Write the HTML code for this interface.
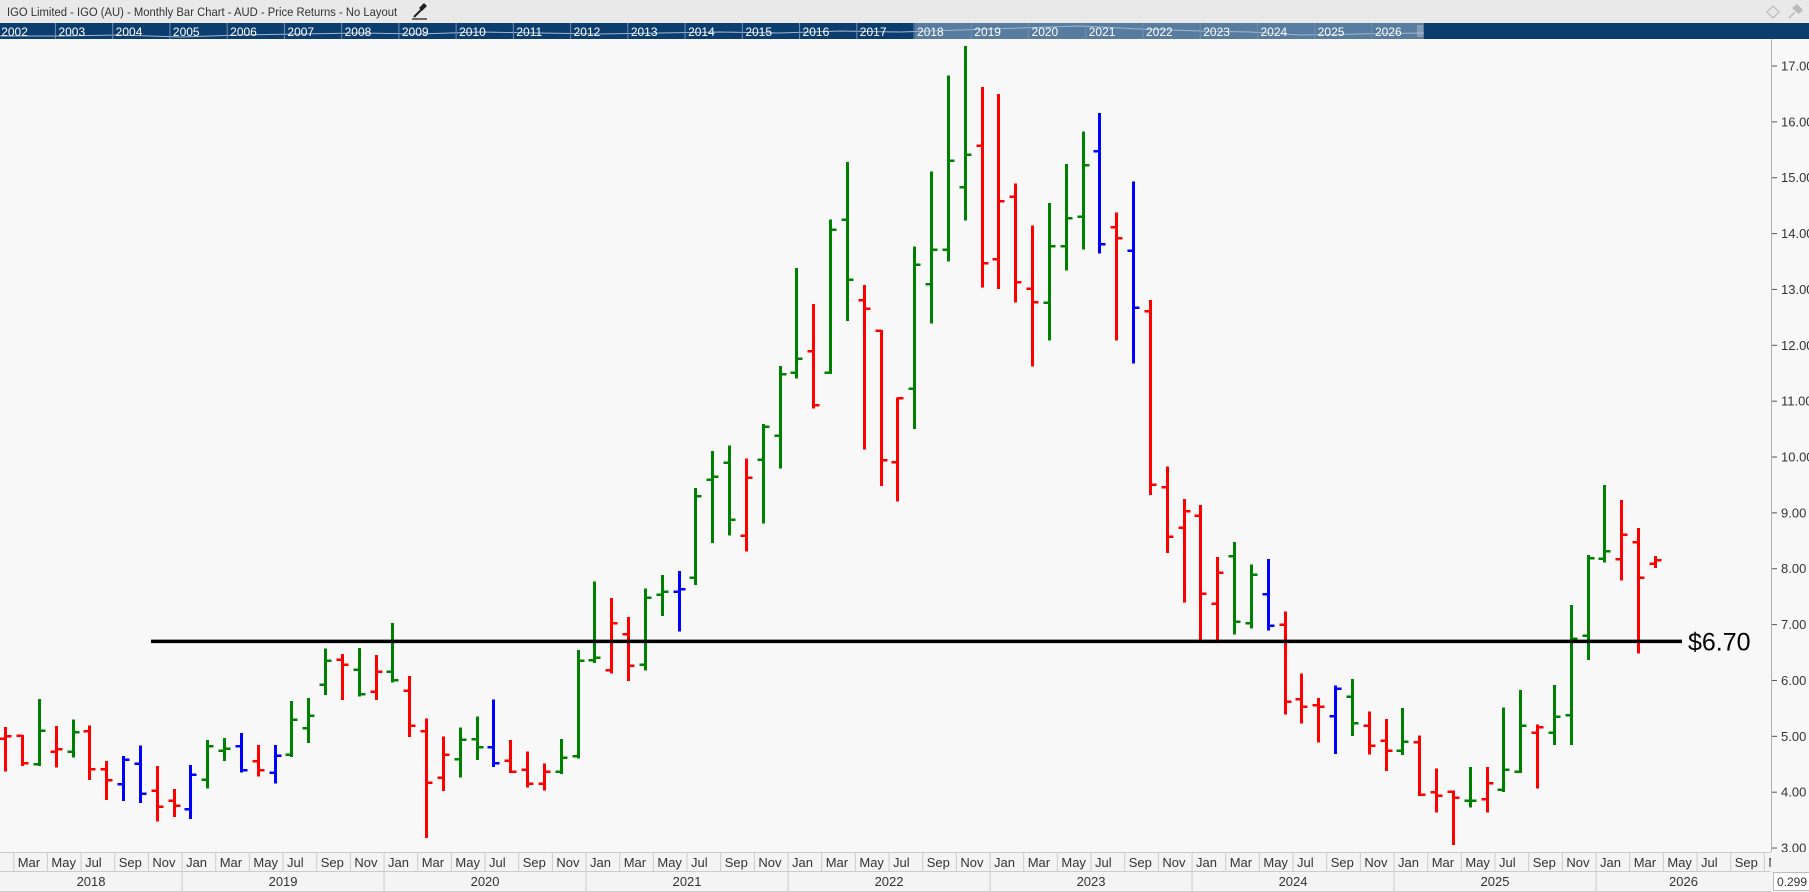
<!DOCTYPE html>
<html><head><meta charset="utf-8">
<style>
html,body{margin:0;padding:0;width:1809px;height:892px;overflow:hidden;background:#f8f8f8;font-family:"Liberation Sans",sans-serif;}
#title{position:absolute;left:0;top:0;width:1809px;height:23px;background:#e9e9e9;}
#title span{position:absolute;left:7px;top:5px;font-size:12.3px;color:#333;white-space:nowrap;transform:scaleX(0.915);transform-origin:0 0;}
#tl{position:absolute;left:0;top:23px;width:1809px;height:16px;background:#0c3d6f;overflow:hidden}
svg{position:absolute;left:0;top:0}
</style></head><body>
<div id="title"><span>IGO Limited - IGO (AU) - Monthly Bar Chart - AUD - Price Returns - No Layout</span></div>
<svg id="top" width="1809" height="40">
  <g stroke="#222" stroke-width="2" fill="none">
    <line x1="414" y1="17" x2="424" y2="7"/>
    <line x1="412" y1="19" x2="427" y2="19" stroke-width="1.3"/>
  </g>
  <polygon points="419,8 424,3 427,6 422,11" fill="#222"/>
  <polygon points="1773,6 1779,12 1773,18 1767,12" fill="none" stroke="#bbb" stroke-width="1.2"/>
  <g fill="#bbb"><polygon points="1792,8 1797,4 1803,10 1799,14"/><line x1="1795" y1="12" x2="1789" y2="18" stroke="#bbb" stroke-width="1.5"/></g>
</svg>
<div id="tl"></div>
<svg id="main" width="1809" height="892"></svg>
<script>
var NS="http://www.w3.org/2000/svg";
function el(p,t,a,txt){var e=document.createElementNS(NS,t);for(var k in a)e.setAttribute(k,a[k]);if(txt!==undefined)e.textContent=txt;p.appendChild(e);return e;}
var tl=document.getElementById('tl');
var ts=document.createElementNS(NS,'svg');ts.setAttribute('width',1809);ts.setAttribute('height',16);ts.style.position='absolute';tl.appendChild(ts);
el(ts,'rect',{x:915,y:0,width:509,height:16,fill:'#587ba0'});
el(ts,'polyline',{points:"0,13 60,13 120,12 180,14 240,12 300,11 360,10 420,11 480,9 540,10 600,11 660,10 720,9 780,10 840,8 900,9 960,7 1020,5 1080,3 1140,6 1200,8 1250,9 1300,12 1360,11 1424,10",fill:'none',stroke:'#9fb8d2','stroke-width':1});
for(var k=0;k<25;k++){var dx=-1.8+57.24*k;el(ts,'line',{x1:dx,y1:0,x2:dx,y2:16,stroke:'#6f8fb2','stroke-width':1});
 el(ts,'text',{x:dx+3,y:13,'font-size':'12px',fill:'#fff','font-family':'Liberation Sans, sans-serif'},String(2002+k));}
for(var g=0;g<3;g++)el(ts,'line',{x1:1418+g*2,y1:2,x2:1418+g*2,y2:14,stroke:'#ccc','stroke-width':0.8});

var s=document.getElementById('main');
function py(p){return 66+(17-p)*55.86;}
el(s,'line',{x1:1771.5,y1:39,x2:1771.5,y2:852,stroke:'#b0b0b0','stroke-width':1});
for(var p=3;p<=17;p++){var y=py(p);el(s,'line',{x1:1772,y1:y,x2:1777,y2:y,stroke:'#555','stroke-width':1});
 el(s,'text',{x:1781,y:y+4.5,'font-size':'13px',fill:'#333'},p.toFixed(2));}
el(s,'rect',{x:0,y:852,width:1809,height:40,fill:'#f4f4f4'});
el(s,'line',{x1:0,y1:852.5,x2:1771,y2:852.5,stroke:'#ccc'});
el(s,'line',{x1:0,y1:871.5,x2:1771,y2:871.5,stroke:'#ccc'});
el(s,'line',{x1:0,y1:891.5,x2:1771,y2:891.5,stroke:'#ccc'});
var mn=['Jan','Feb','Mar','Apr','May','Jun','Jul','Aug','Sep','Oct','Nov','Dec'];
var ml=el(s,'svg',{x:0,y:852,width:1771,height:20});
for(var m=-1;m<106;m++){var mi=(m+1)%12;var bx=5.3+16.833*m-8.4;
 if(mi%2==0){ if(bx<0||bx>1770)continue; el(s,'line',{x1:bx,y1:852,x2:bx,y2:871,stroke:'#ccc'});
  el(ml,'text',{x:bx+4,y:15,'font-size':'13px',fill:'#333'},mn[mi]);}
 if(mi==0&&bx>0&&bx<1771){el(s,'line',{x1:bx,y1:871,x2:bx,y2:891,stroke:'#ccc'});}
}
for(var yr=2018;yr<=2026;yr++){var a=5.3+16.833*((yr-2018)*12-1)-8.4,b=a+202;if(a<0)a=0;if(b>1771)b=1771;
 el(s,'text',{x:(a+b)/2,y:886,'font-size':'13px',fill:'#333','text-anchor':'middle'},String(yr));}
el(s,'rect',{x:1773.5,y:872.5,width:40,height:18,fill:'#fff',stroke:'#bbb'});
el(s,'text',{x:1777,y:886,'font-size':'12px',fill:'#333'},'0.299');
var R='#ff0000',G='#008000',B='#0000ff';
var d=[
[4.96,5.15,4.39,5.0,R],[5.01,5.01,4.49,4.52,R],[4.5,5.65,4.49,5.1,G],[4.72,5.17,4.46,4.77,R],[4.72,5.28,4.64,5.07,G],
[5.09,5.18,4.24,4.41,R],[4.41,4.54,3.88,4.21,R],[4.14,4.63,3.86,4.58,B],[4.51,4.82,3.82,3.97,B],[4.03,4.45,3.49,3.74,R],
[3.85,4.04,3.57,3.76,R],[3.69,4.47,3.54,4.31,B],[4.22,4.92,4.08,4.82,G],[4.74,4.95,4.58,4.78,G],[4.82,5.04,4.37,4.39,B],
[4.55,4.83,4.3,4.39,R],[4.35,4.83,4.17,4.65,B],[4.67,5.61,4.65,5.3,G],[5.14,5.67,4.9,5.37,G],[5.92,6.55,5.76,6.35,G],
[6.37,6.46,5.67,6.28,R],[6.19,6.56,5.73,5.75,G],[5.8,6.44,5.67,6.16,R],[6.16,7.01,5.98,6.0,G],[5.82,6.06,5.01,5.19,R],
[5.09,5.3,3.2,4.17,R],[4.26,4.98,4.04,4.67,R],[4.59,5.14,4.28,4.94,G],[4.95,5.34,4.59,4.8,G],[4.8,5.64,4.47,4.52,B],
[4.56,4.92,4.36,4.37,R],[4.4,4.71,4.1,4.15,R],[4.15,4.5,4.05,4.37,R],[4.37,4.93,4.34,4.62,G],[4.64,6.53,4.62,6.35,G],
[6.36,7.75,6.33,6.41,G],[6.18,7.46,6.14,7.02,R],[6.83,7.12,6.01,6.26,R],[6.28,7.63,6.2,7.48,G],[7.53,7.87,7.17,7.59,G],
[7.59,7.94,6.89,7.63,B],[7.84,9.43,7.73,9.3,G],[9.59,10.09,8.48,9.65,G],[9.9,10.19,8.61,8.88,G],[8.59,9.96,8.33,9.63,R],
[9.95,10.57,8.83,10.54,G],[10.38,11.61,9.81,11.48,G],[11.51,13.37,11.42,11.76,G],[11.89,12.72,10.89,10.93,R],[11.51,14.23,11.5,14.07,G],
[14.25,15.26,12.45,13.17,G],[12.81,13.06,10.15,12.65,R],[12.26,12.26,9.5,9.94,R],[9.91,11.05,9.22,11.05,R],[11.22,13.75,10.52,13.44,G],
[13.09,15.09,12.41,13.71,G],[13.71,16.81,13.52,15.3,G],[14.83,17.34,14.25,15.41,G],[15.57,16.61,13.05,13.47,R],[13.54,16.48,13.03,14.58,R],
[14.66,14.88,12.78,13.13,R],[13.01,14.13,11.64,12.77,R],[12.76,14.53,12.1,13.77,G],[13.77,15.23,13.36,14.27,G],[14.3,15.81,13.73,15.22,G],
[15.47,16.14,13.66,13.81,B],[14.11,14.36,12.1,13.92,R],[13.69,14.91,11.69,12.67,B],[12.61,12.79,9.34,9.5,R],[9.46,9.81,8.3,8.57,R],
[8.73,9.23,7.41,9.03,R],[8.95,9.12,6.7,7.55,R],[7.37,8.19,6.7,7.93,R],[8.22,8.46,6.84,7.05,G],[7.02,8.06,6.95,7.89,G],
[7.54,8.16,6.91,6.98,B],[7.0,7.22,5.41,5.62,R],[5.66,6.11,5.25,5.53,R],[5.56,5.67,4.91,5.53,R],[5.36,5.89,4.7,5.85,B],
[5.71,6.01,5.02,5.23,G],[5.19,5.43,4.69,4.83,R],[4.92,5.29,4.4,4.74,R],[4.74,5.49,4.68,4.9,G],[4.89,5.0,3.95,3.95,R],
[4.0,4.41,3.65,3.94,R],[4.01,4.01,3.07,3.9,R],[3.85,4.43,3.74,3.85,G],[3.87,4.43,3.65,4.16,R],[4.04,5.5,4.02,4.4,G],
[4.37,5.81,4.36,5.19,G],[5.06,5.19,4.08,5.16,R],[5.06,5.9,4.86,5.35,G],[5.38,7.33,4.86,6.75,G],[6.8,8.23,6.38,8.19,G],
[8.18,9.48,8.13,8.31,G],[8.17,9.21,7.81,8.61,R],[8.47,8.71,6.5,7.84,R],[8.09,8.21,8.03,8.15,R]
];
var g=el(s,'g',{'stroke-width':3,'shape-rendering':'crispEdges'});
for(var i=0;i<d.length;i++){var x=Math.round(5.3+16.833*i)+0.5,b=d[i];
 el(g,'line',{x1:x,y1:py(b[1])-1,x2:x,y2:py(b[2])+1,stroke:b[4]});
 el(g,'line',{x1:x-6,y1:py(b[0]),x2:x,y2:py(b[0]),stroke:b[4],'stroke-width':2.5});
 el(g,'line',{x1:x,y1:py(b[3]),x2:x+6,y2:py(b[3]),stroke:b[4],'stroke-width':2.5});}
var ly=py(6.7);
el(s,'line',{x1:151,y1:ly,x2:1682,y2:ly,stroke:'#000','stroke-width':3.5});
el(s,'text',{x:1688,y:ly+9,'font-size':'25px',fill:'#000'},'$6.70');
</script>
</body></html>
